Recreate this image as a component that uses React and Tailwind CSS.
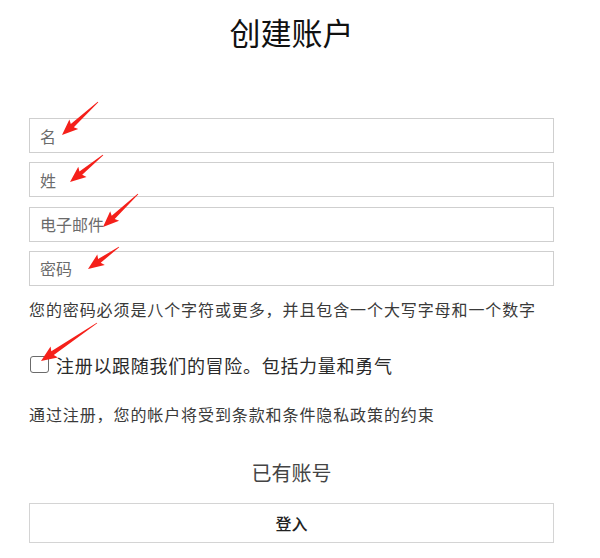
import React from "react";

const arrows = [
  { tail: [98, 102], tip: [62, 135] },
  { tail: [103, 155], tip: [70, 182] },
  { tail: [138, 194], tip: [103, 227] },
  { tail: [119, 247], tip: [88, 269] },
  { tail: [97, 323], tip: [41, 361] },
];

function arrowPoints(tail, tip) {
  const dx = tip[0] - tail[0];
  const dy = tip[1] - tail[1];
  const len = Math.hypot(dx, dy);
  const ux = dx / len;
  const uy = dy / len;
  const nx = -uy;
  const ny = ux;
  const headLen = 14;
  const bx = tip[0] - ux * headLen;
  const by = tip[1] - uy * headLen;
  const p = (x, y) => `${x.toFixed(1)},${y.toFixed(1)}`;
  return [
    p(tail[0] + nx * 0.4, tail[1] + ny * 0.4),
    p(bx + nx * 2.2, by + ny * 2.2),
    p(bx - ux * 2 + nx * 6.5, by - uy * 2 + ny * 6.5),
    p(tip[0], tip[1]),
    p(bx - ux * 2 - nx * 6.5, by - uy * 2 - ny * 6.5),
    p(bx - nx * 2.2, by - ny * 2.2),
    p(tail[0] - nx * 0.4, tail[1] - ny * 0.4),
  ].join(" ");
}

function Field({ placeholder }) {
  return (
    <input
      type="text"
      placeholder={placeholder}
      className="h-[35px] w-full border border-[#cfcfcf] bg-white px-[10px] text-[16px] text-[#333] placeholder:text-[#6b6b6b] outline-none"
    />
  );
}

export default function App() {
  return (
    <div
      className="relative w-[600px] h-[558px] bg-white overflow-hidden"
      style={{ fontFamily: '"Noto Sans CJK SC", "Noto Sans", sans-serif' }}
    >
      <div className="ml-[29px] w-[525px] flex flex-col">
        <h1 className="mt-[15px] h-[33px] leading-[33px] text-center text-[31px] font-normal text-[#111]">
          创建账户
        </h1>
        <div className="mt-[70px] flex flex-col gap-[9.3px]">
          <Field placeholder="名" />
          <Field placeholder="姓" />
          <Field placeholder="电子邮件" />
          <Field placeholder="密码" />
        </div>
        <p className="mt-[15px] h-[16px] leading-[16px] text-[16px] tracking-[0.9px] text-[#3a3a3a] whitespace-nowrap">
          您的密码必须是八个字符或更多，并且包含一个大写字母和一个数字
        </p>
        <label className="mt-[38px] flex items-center h-[20px]">
          <span className="ml-[1px] w-[19px] h-[17px] rounded-[3px] border border-[#6b6b6b] bg-white shrink-0" />
          <span className="ml-[7px] text-[18px] leading-[20px] tracking-[0.7px] text-[#2a2a2a] whitespace-nowrap">
            注册以跟随我们的冒险。包括力量和勇气
          </span>
        </label>
        <p className="mt-[31px] h-[16px] leading-[16px] text-[16px] tracking-[0.9px] text-[#3a3a3a] whitespace-nowrap">
          通过注册，您的帐户将受到条款和条件隐私政策的约束
        </p>
        <p className="mt-[40px] h-[21px] leading-[21px] text-center text-[20px] text-[#444]">
          已有账号
        </p>
        <button className="mt-[20px] h-[40px] w-full border border-[#d4d4d4] bg-white text-[16px] font-medium text-[#222]">
          登入
        </button>
      </div>
      <svg
        className="absolute inset-0 pointer-events-none"
        width="600"
        height="558"
        viewBox="0 0 600 558"
      >
        {arrows.map((a, i) => (
          <polygon key={i} points={arrowPoints(a.tail, a.tip)} fill="#f5201a" />
        ))}
      </svg>
    </div>
  );
}
